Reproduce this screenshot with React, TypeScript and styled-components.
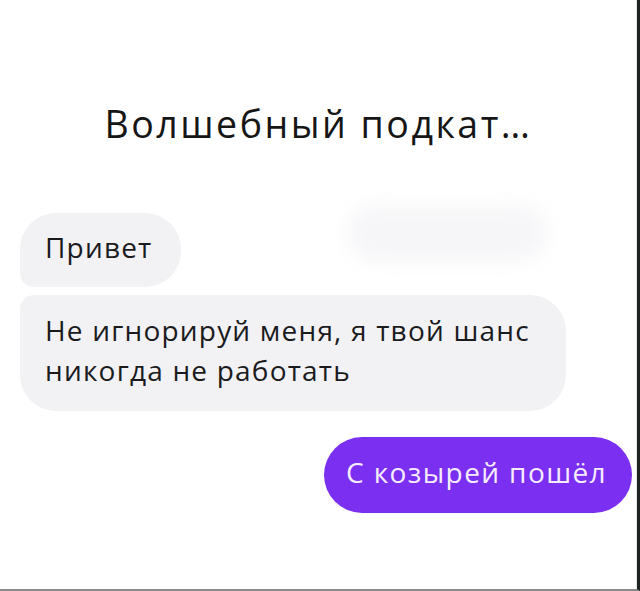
import React from "react";
import styled, { createGlobalStyle } from "styled-components";

const GlobalStyle = createGlobalStyle`
    html, body {
        margin: 0;
        padding: 0;
        background: #ffffff;
    }
    body {
        font-family: "Open Sans", "Liberation Sans", Arial, sans-serif;
        color: #1b1b1d;
    }
`;

type BubbleProps = {
    $first?: boolean;
};

const App = (): JSX.Element => {
    return (
        <>
            <GlobalStyle />
            <Frame>
                <Title>Волшебный подкат…</Title>
                <Chat>
                    <Row>
                        <IncomingBubble $first>Привет</IncomingBubble>
                        <HiddenBubble />
                    </Row>
                    <IncomingBubble>
                        Не игнорируй меня, я твой шанс
                        <br />
                        никогда не работать
                    </IncomingBubble>
                    <OutgoingBubble>С козырей пошёл</OutgoingBubble>
                </Chat>
            </Frame>
        </>
    );
};

export default App;

const Frame = styled.div`
    box-sizing: border-box;
    width: 640px;
    height: 591px;
    display: flex;
    flex-direction: column;
    padding-top: 102px;
    border-right: 3px solid #1f2222;
    border-bottom: 2px solid #8a8a8a;
    box-shadow: inset -1px 0 0 #e6e6e6;
    overflow: hidden;
`;

const Title = styled.h1`
    margin: 0;
    font-size: 37.5px;
    line-height: 44px;
    font-weight: 400;
    letter-spacing: 2.5px;
    text-align: center;
    color: #161616;
`;

const Chat = styled.div`
    display: flex;
    flex-direction: column;
    align-items: flex-start;
    margin-top: 67px;
    padding: 0 5px 0 20px;
`;

const Row = styled.div`
    display: flex;
    align-self: stretch;
    align-items: flex-start;
    justify-content: space-between;
    margin-bottom: 8px;
`;

// Message bubbles
const IncomingBubble = styled.div<BubbleProps>`
    background: #f2f2f5;
    color: #1b1b1d;
    font-size: 28px;
    line-height: 40px;
    letter-spacing: 1.2px;
    padding: ${({ $first }) => ($first ? "14px 28px 20px 25px" : "15px 36px 21px 25px")};
    border-radius: ${({ $first }) => ($first ? "36px 36px 36px 14px" : "14px 36px 36px 36px")};
`;

const HiddenBubble = styled.div`
    width: 200px;
    height: 56px;
    margin: -8px 85px 0 0;
    border-radius: 30px;
    background: #f4f3f6;
    filter: blur(9px);
    opacity: 0.8;
`;

const OutgoingBubble = styled.div`
    align-self: flex-end;
    margin-top: 26px;
    background: #7b2ff1;
    color: #f6ecff;
    font-size: 28px;
    line-height: 40px;
    letter-spacing: 1.4px;
    padding: 15px 25px 21px 22px;
    border-radius: 38px;
`;
